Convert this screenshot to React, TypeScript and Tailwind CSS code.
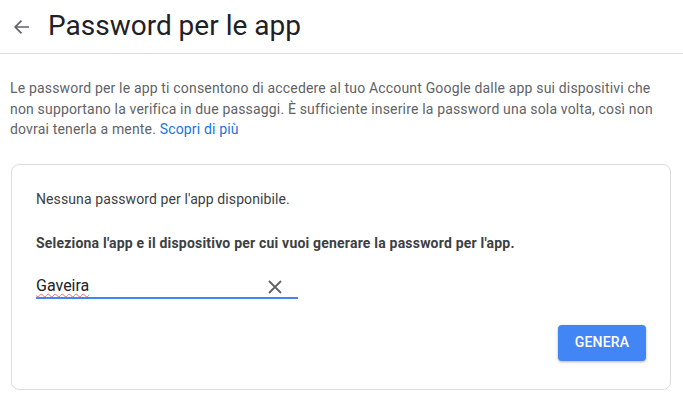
import React from "react";

export default function App() {
  return (
    <div className="min-h-[414px] w-[683px] bg-white font-['Roboto',sans-serif] overflow-hidden">
      <div className="flex h-[54px] items-center border-b border-[#dadce0]">
        <div className="ml-[11px] flex h-[20px] w-[20px] items-center justify-center">
          <svg width="17" height="16" viewBox="0 0 17 16" fill="none">
            <path d="M16 8H2.5M8.5 1.7L2.2 8l6.3 6.3" stroke="#5f6368" strokeWidth="1.7" />
          </svg>
        </div>
        <h1 className="ml-[17px] text-[28px] leading-[36px] text-[#202124] mt-[-1px]">Password per le app</h1>
      </div>
      <p className="mx-[10px] mt-[24px] text-[14px] leading-[20.5px] tracking-[0.17px] text-[#5f6368]">
        Le password per le app ti consentono di accedere al tuo Account Google dalle app sui dispositivi che non supportano la verifica in due passaggi. È sufficiente inserire la password una sola volta, così non dovrai tenerla a mente. <span className="text-[#1a73e8]">Scopri di più</span>
      </p>
      <div className="ml-[11px] mr-[12px] mt-[24px] rounded-lg border border-[#dadce0] px-[24px] pt-[24px] pb-[28px]">
        <p className="text-[14px] leading-[20px] tracking-[0.1px] text-[#3c4043]">Nessuna password per l'app disponibile.</p>
        <p className="mt-[24px] text-[14px] leading-[20px] font-bold tracking-[0.2px] text-[#3c4043]">
          Seleziona l'app e il dispositivo per cui vuoi generare la password per l'app.
        </p>
        <div className="mt-[16px] flex h-[30px] w-[262px] items-end border-b-2 border-[#4285f4]">
          <span className="flex-1 text-[16px] leading-[22px] text-[#202124] underline decoration-wavy decoration-[#e57373] decoration-1 underline-offset-[2px]">Gaveira</span>
          <svg className="mr-[15px] mb-[2px]" width="16" height="16" viewBox="0 0 16 16" fill="none">
            <path d="M2 2l12 12M14 2L2 14" stroke="#5f6368" strokeWidth="1.8" />
          </svg>
        </div>
        <div className="mt-[26px] flex justify-end">
          <button className="h-[36px] w-[88px] rounded-[4px] bg-[#4285f4] text-[14px] font-medium tracking-[0.2px] text-white shadow-[0_1px_3px_rgba(0,0,0,0.3)]">
            GENERA
          </button>
        </div>
      </div>
    </div>
  );
}
